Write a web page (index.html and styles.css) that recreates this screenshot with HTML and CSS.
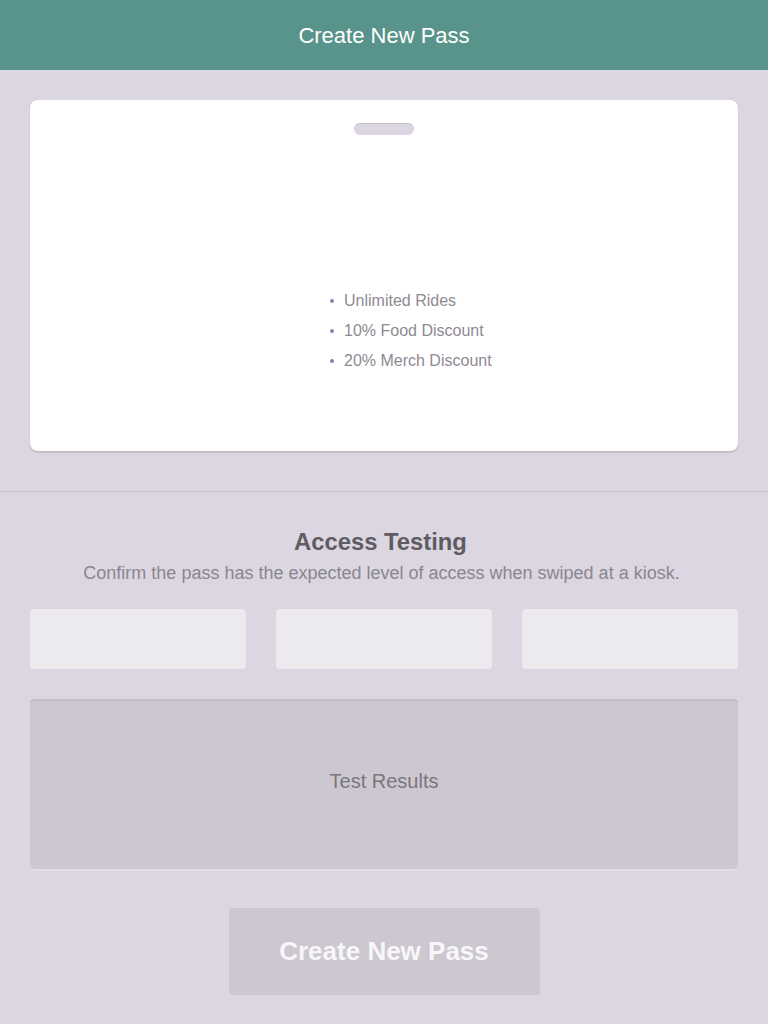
FILE: index.html
```html
<!DOCTYPE html>
<html>
<head>
<meta charset="utf-8">
<link rel="stylesheet" href="styles.css">
</head>
<body>
<header class="topbar">Create New Pass</header>
<main class="main">
  <section class="pass-area">
    <div class="pass-card">
      <div class="slot"></div>
      <ul class="perks">
        <li>Unlimited Rides</li>
        <li>10% Food Discount</li>
        <li>20% Merch Discount</li>
      </ul>
    </div>
  </section>
  <hr class="divider">
  <section class="testing">
    <h2 class="testing-title">Access Testing</h2>
    <p class="testing-sub">Confirm the pass has the expected level of access when swiped at a kiosk.</p>
    <div class="kiosks">
      <div class="kiosk"></div>
      <div class="kiosk"></div>
      <div class="kiosk"></div>
    </div>
    <div class="results">Test Results</div>
    <div class="actions">
      <button class="create-btn">Create New Pass</button>
    </div>
  </section>
</main>
</body>
</html>
```

FILE: styles.css
```css
* { box-sizing: border-box; }
html, body {
  margin: 0;
  padding: 0;
  background: #dbd6e1;
  font-family: "Liberation Sans", Arial, sans-serif;
}
.topbar {
  height: 70px;
  background: #58948b;
  color: #ffffff;
  font-size: 22px;
  display: flex;
  align-items: center;
  justify-content: center;
  padding-top: 1px;
}
.pass-area {
  padding: 30px 30px 40px;
}
.pass-card {
  background: #ffffff;
  height: 351px;
  border-radius: 8px;
  box-shadow: 0 1px 0 1px rgba(0,0,0,0.03), 0 2px 0 #c9c4cc;
  display: flex;
  flex-direction: column;
  align-items: center;
  padding-top: 23px;
}
.slot {
  width: 60px;
  height: 12px;
  border-radius: 6px;
  background: #dbd6e1;
  box-shadow: inset 0 1px 0 #c7c2ca;
}
.perks {
  list-style: none;
  margin: 151px 0 0 0;
  padding: 0 0 0 218px;
  align-self: flex-start;
  margin-left: 82px;
  color: #8e8a93;
  font-size: 16px;
  line-height: 30px;
}
.perks li {
  position: relative;
  padding-left: 14px;
}
.perks li::before {
  content: "";
  position: absolute;
  left: 0;
  top: 13px;
  width: 4px;
  height: 4px;
  border-radius: 50%;
  background: #8d7fb0;
}
.divider {
  margin: 0;
  border: 0;
  height: 1px;
  background: #c9c4cd;
}
.testing {
  padding: 36px 30px 29px;
  display: flex;
  flex-direction: column;
}
.testing-title {
  margin: 0 7px 0 0;
  text-align: center;
  font-size: 23.8px;
  line-height: 28px;
  font-weight: bold;
  color: #5e5b61;
}
.testing-sub {
  margin: 5px 5px 0 0;
  text-align: center;
  font-size: 18px;
  line-height: 24px;
  color: #8a868d;
}
.kiosks {
  margin-top: 24px;
  display: grid;
  grid-template-columns: repeat(3, 1fr);
  gap: 30px;
}
.kiosk {
  height: 60px;
  border-radius: 4px;
  background: #eceaef;
}
.results {
  margin-top: 30px;
  height: 170px;
  border-radius: 4px;
  background: #cdc7d1;
  box-shadow: inset 0 2px 0 #c2bcc6, 0 2px 0 #e2dee6;
  color: #79757c;
  font-size: 20px;
  display: flex;
  align-items: center;
  justify-content: center;
  padding-bottom: 5px;
}
.actions {
  margin-top: 39px;
  display: flex;
  justify-content: center;
}
.create-btn {
  width: 311px;
  height: 87px;
  border: 0;
  border-radius: 4px;
  background: #cdc7d1;
  color: #f7f6f9;
  font-family: "Liberation Sans", Arial, sans-serif;
  font-size: 26px;
  font-weight: bold;
  padding: 0 0 1px;
}
```
